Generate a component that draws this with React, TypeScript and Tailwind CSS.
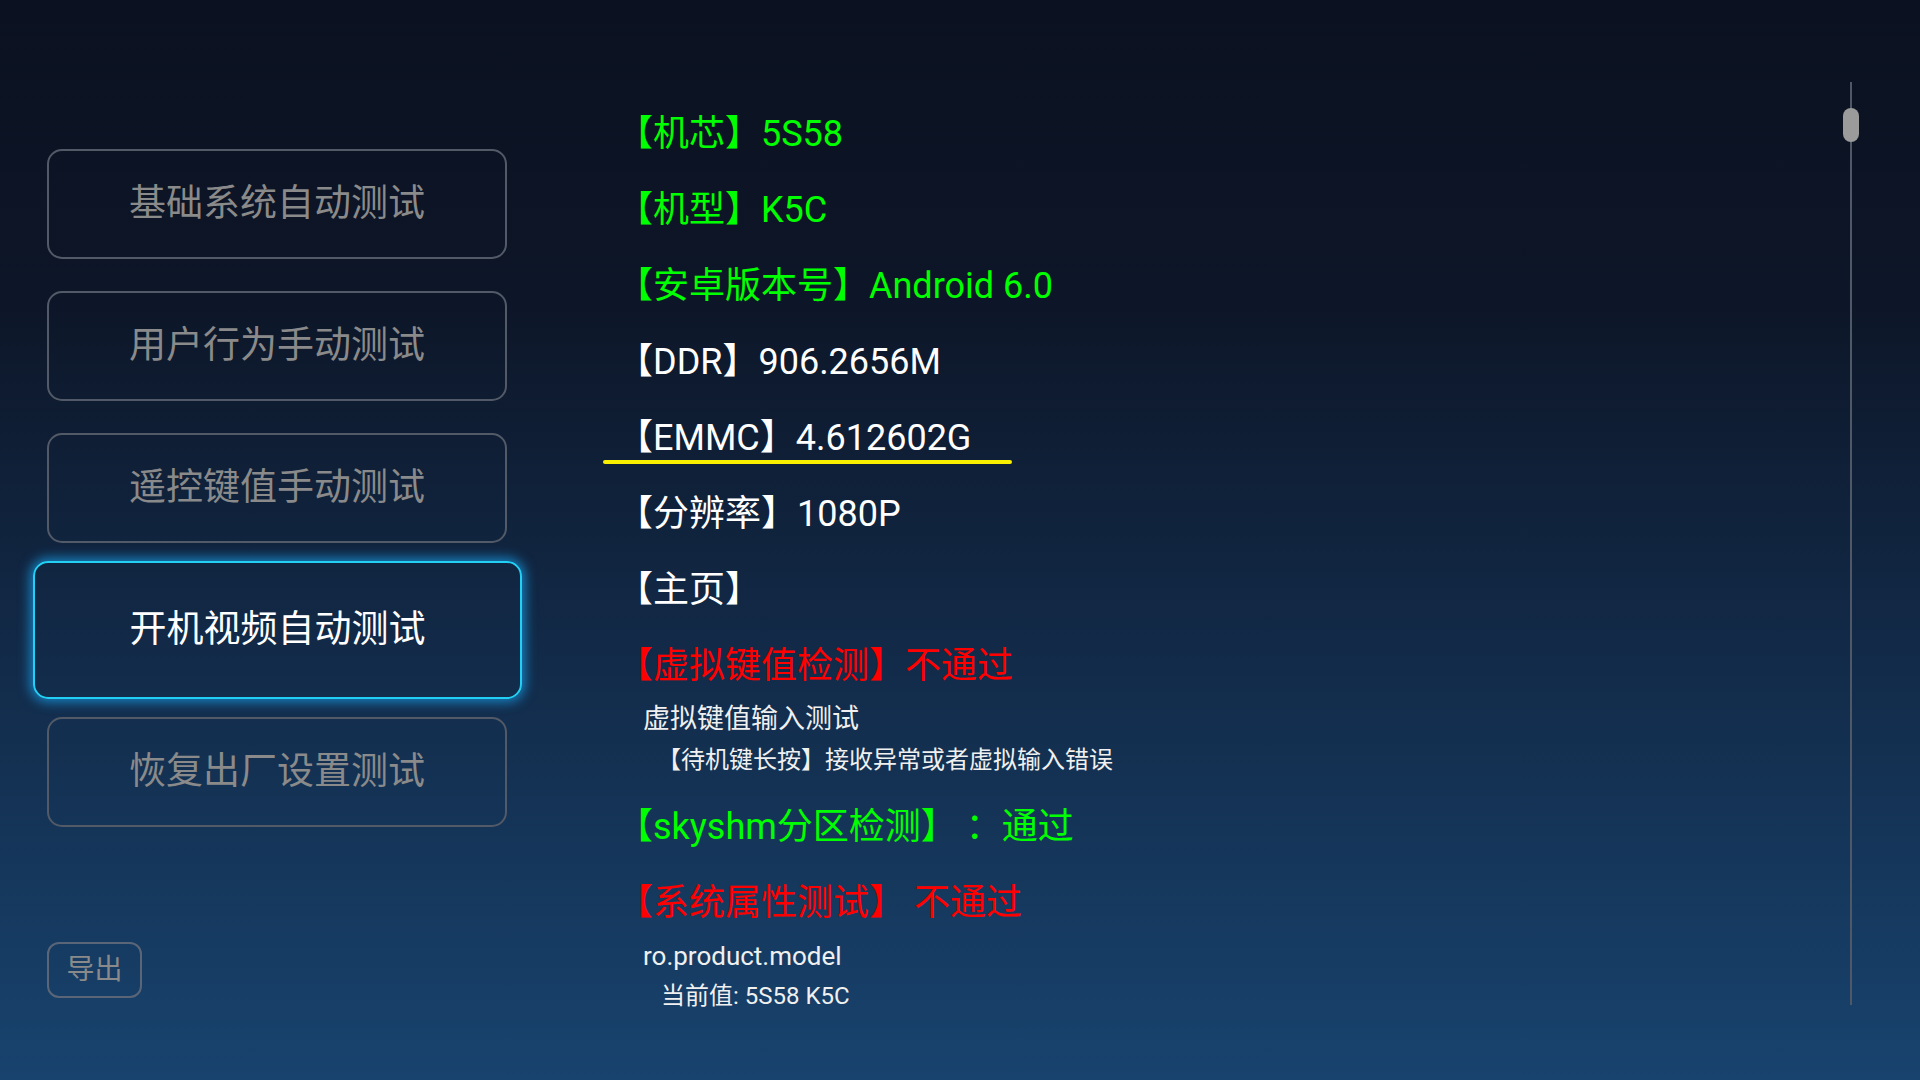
import React from "react";

const menu = [
  { label: "基础系统自动测试", active: false },
  { label: "用户行为手动测试", active: false },
  { label: "遥控键值手动测试", active: false },
  { label: "开机视频自动测试", active: true },
  { label: "恢复出厂设置测试", active: false },
];

export default function App() {
  return (
    <div className="w-[1920px] h-[1080px] flex overflow-hidden bg-[linear-gradient(to_bottom,#0b1120_0%,#0d1628_28%,#122a48_60%,#18436e_100%)] font-[family-name:Roboto,'Noto_Sans_CJK_SC',sans-serif]">
      <aside className="w-[603px] shrink-0 pl-[47px] pt-[149px] flex flex-col">
        <div className="flex flex-col gap-[32px]">
          {menu.map((m) =>
            m.active ? (
              <div
                key={m.label}
                className="w-[489px] h-[138px] -ml-[14px] -my-[14px] rounded-[15px] border-2 border-[#22d0f6] shadow-[0_0_12px_3px_rgba(24,160,235,0.75)] flex items-center justify-center text-[37px] text-white"
              >
                {m.label}
              </div>
            ) : (
              <div
                key={m.label}
                className="w-[460px] h-[110px] rounded-[15px] border-2 border-[#525a67] flex items-center justify-center text-[37px] text-[#8a8a8a]"
              >
                {m.label}
              </div>
            )
          )}
        </div>
        <div className="mt-[115px] w-[95px] h-[56px] rounded-[12px] border-2 border-[#5a6678] flex items-center justify-center text-[28px] text-[#8a8a8a]">
          导出
        </div>
      </aside>

      <main className="flex-1 pl-[14px] pt-[96px] flex flex-col whitespace-pre">
        <div className="h-[76px] flex items-center text-[36px] text-[#00ff00]">【机芯】5S58</div>
        <div className="h-[76px] flex items-center text-[36px] text-[#00ff00]">【机型】K5C</div>
        <div className="h-[76px] flex items-center text-[36px] text-[#00ff00]">【安卓版本号】Android 6.0</div>
        <div className="h-[76px] flex items-center text-[36px] text-white">【DDR】906.2656M</div>
        <div className="relative h-[76px] flex items-center text-[36px] text-white">
          【EMMC】4.612602G
          <span className="absolute left-[-14px] bottom-[12px] w-[409px] h-[4px] rounded-full bg-[#f8f000]" />
        </div>
        <div className="h-[76px] flex items-center text-[36px] text-white">【分辨率】1080P</div>
        <div className="h-[76px] flex items-center text-[36px] text-white">【主页】</div>
        <div className="h-[76px] flex items-center text-[36px] text-[#ff0000]">【虚拟键值检测】不通过</div>
        <div className="h-[31px] flex items-center pl-[26px] text-[27px] text-[#f0f0f0]">虚拟键值输入测试</div>
        <div className="h-[49px] flex items-center pl-[40px] text-[24px] text-[#f0f0f0]">【待机键长按】接收异常或者虚拟输入错误</div>
        <div className="mt-[5px] h-[76px] flex items-center text-[36px] text-[#00ff00]">【skyshm分区检测】 ：通过</div>
        <div className="h-[76px] flex items-center text-[36px] text-[#ff0000]">【系统属性测试】 不通过</div>
        <div className="h-[31px] flex items-center pl-[26px] text-[26px] text-[#f0f0f0]">ro.product.model</div>
        <div className="h-[48px] flex items-center pl-[44px] text-[24px] text-[#f0f0f0]">当前值: 5S58 K5C</div>
      </main>

      <div className="shrink-0 pr-[61px] pt-[82px] pb-[75px] flex">
        <div className="relative w-[16px] h-full flex justify-center">
          <div className="w-[2px] h-full bg-[#4f5866]" />
          <div className="absolute top-[26px] left-0 w-[16px] h-[34px] rounded-full bg-[#9b9b9b]" />
        </div>
      </div>
    </div>
  );
}
